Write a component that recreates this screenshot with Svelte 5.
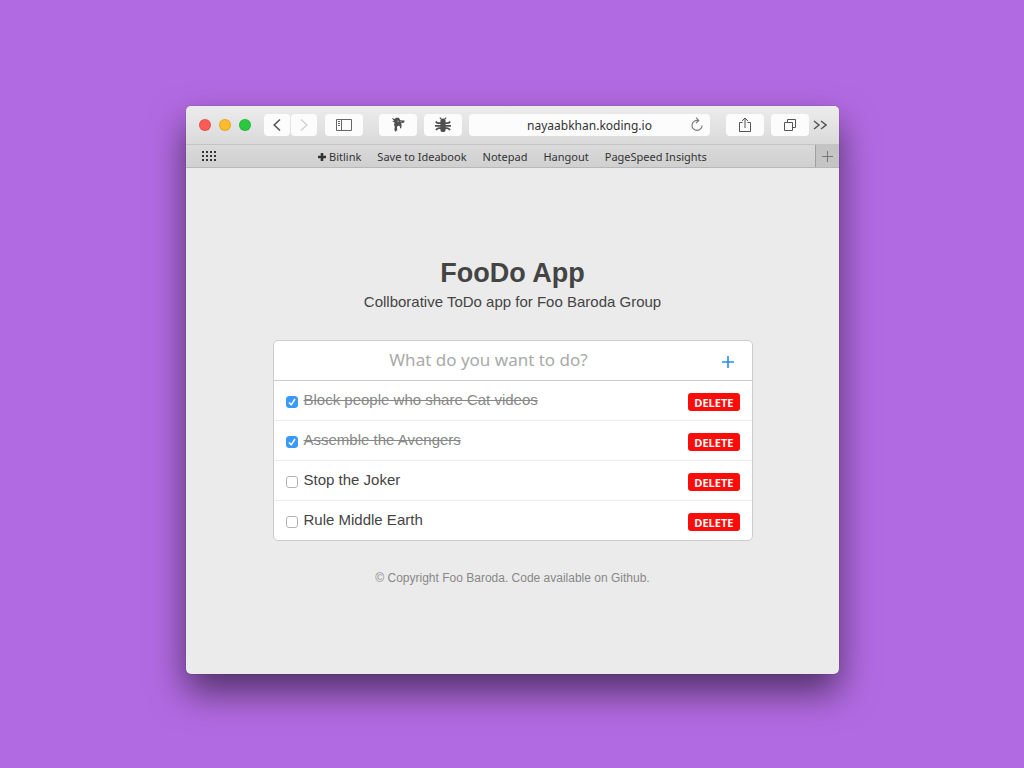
<script lang="ts">
	type Todo = { id: number; text: string; done: boolean };

	const bookmarks = ["Save to Ideabook", "Notepad", "Hangout", "PageSpeed Insights"];

	let draft = $state("");
	let nextId = 5;
	let todos: Todo[] = $state([
		{ id: 1, text: "Block people who share Cat videos", done: true },
		{ id: 2, text: "Assemble the Avengers", done: true },
		{ id: 3, text: "Stop the Joker", done: false },
		{ id: 4, text: "Rule Middle Earth", done: false },
	]);

	function add(event: SubmitEvent) {
		event.preventDefault();
		const text = draft.trim();
		if (!text) return;
		todos.push({ id: nextId++, text, done: false });
		draft = "";
	}

	function remove(id: number) {
		todos = todos.filter((todo) => todo.id !== id);
	}
</script>

<div class="desktop">
	<div class="window">
		<header class="toolbar">
			<div class="lights">
				<button class="light close" aria-label="Close"></button>
				<button class="light minimize" aria-label="Minimize"></button>
				<button class="light zoom" aria-label="Zoom"></button>
			</div>
			<div class="history">
				<button class="tool half" aria-label="Back">
					<svg width="10" height="14" viewBox="0 0 10 14" fill="none" stroke="#555" stroke-width="1.6"><path d="M8 1.5 2.2 7 8 12.5" /></svg>
				</button>
				<button class="tool half" aria-label="Forward" disabled>
					<svg width="10" height="14" viewBox="0 0 10 14" fill="none" stroke="#d0d0d0" stroke-width="1.4"><path d="M2 1.5 7.8 7 2 12.5" /></svg>
				</button>
			</div>
			<button class="tool" aria-label="Sidebar">
				<svg width="16" height="14" viewBox="0 0 16 14" fill="none" stroke="#666" stroke-width="1"><path d="M.5 1.5h15v11H.5zM5.5 1.5v11M2 3.5h2M2 5.5h2M2 7.5h2" /></svg>
			</button>
			<div class="extensions">
				<button class="tool" aria-label="Ghostery">
					<svg width="14" height="16" viewBox="0 0 14 16" fill="#505050"><path d="M.8 1 3.600 2 5 .8h3l1.200 2.400 4.200.4v2l-3.400.6.6 1.600-.2 2.800-1.200 1.200-.4-2.600-1.400-.6-1.400 1.400.2 3.200-2 1.600-.8-2 .4-3.200-.8-1.600.6-2.400L1 4.600 3 4z" /><path d="M6.500 4.200h1.300M9.500 4.600h1" stroke="#fff" stroke-width=".7" /></svg>
				</button>
				<button class="tool" aria-label="Firebug">
					<svg width="18" height="16" viewBox="0 0 18 16" fill="none" stroke="#505050" stroke-width="1.8"><rect x="6.400" y="1.600" width="5.200" height="13.400" rx="2.600" fill="#505050" stroke="none" /><path d="M5.800.6 7.500 2.400M12.200.6l-1.700 1.800" stroke-width="1.200" /><path d="M7 6.200H4.800Q3 6.200 1.800 4.400M11 6.200h2.200q1.800 0 3-1.800M1 8.800h16M7 11.200H5q-2 0-3 2M11 11.200h2q2 0 3 2" /></svg>
				</button>
			</div>
			<div class="address">
				<input type="text" value="nayaabkhan.koding.io" aria-label="Address" spellcheck="false" />
				<button class="reload" aria-label="Reload">
					<svg width="14" height="16" viewBox="0 0 14 16" fill="none" stroke="#777" stroke-width="1.1"><path d="M8.200 3.400H7A5 5 0 1 0 12 8.400M6 .6l2.800 2.800L6 6.200" /></svg>
				</button>
			</div>
			<div class="actions">
				<button class="tool" aria-label="Share">
					<svg width="14" height="16" viewBox="0 0 14 16" fill="none" stroke="#555" stroke-width="1"><path d="M4.500 5.500h-3v9h11v-9h-3M7 11V1.500M4 4l3-3 3 3" /></svg>
				</button>
				<button class="tool" aria-label="Show all tabs">
					<svg width="14" height="14" viewBox="0 0 14 14" fill="none" stroke="#555" stroke-width="1"><path d="M1.500 4.500h8v8h-8zM4.500 4.500v-3h8v8h-3" /></svg>
				</button>
			</div>
			<button class="more" aria-label="More">
				<svg width="14" height="10" viewBox="0 0 14 10" fill="none" stroke="#555" stroke-width="1.500"><path d="M1 1l5 4-5 4M8 1l5 4-5 4" /></svg>
			</button>
		</header>

		<nav class="bookmarks">
			<button class="grid" aria-label="Top sites">
				<svg width="14" height="10" viewBox="0 0 14 10" fill="none" stroke="#333" stroke-width="2" stroke-dasharray="2 2"><path d="M0 1h14M0 5h14M0 9h14" /></svg>
			</button>
			<div class="links">
				<a href="#bitlink">
					<svg width="8" height="8" viewBox="0 0 8 8" stroke="#333" stroke-width="2.600"><path d="M4 0v8M0 4h8" /></svg>
					Bitlink
				</a>
				{#each bookmarks as name}
					<a href="#{name.toLowerCase().replaceAll(' ', '-')}">{name}</a>
				{/each}
			</div>
			<button class="new-tab" aria-label="New tab">
				<svg width="11" height="11" viewBox="0 0 11 11" stroke="#777" stroke-width="1"><path d="M5.500 0v11M0 5.500h11" /></svg>
			</button>
		</nav>

		<main>
			<h1>FooDo App</h1>
			<p class="tagline">Collborative ToDo app for Foo Baroda Group</p>

			<div class="card">
				<form onsubmit={add}>
					<input type="text" bind:value={draft} placeholder="What do you want to do?" aria-label="What do you want to do?" />
					<button aria-label="Add">
						<svg width="12" height="12" viewBox="0 0 12 12" stroke="#2b8cf0" stroke-width="1.600"><path d="M6 0v12M0 6h12" /></svg>
					</button>
				</form>
				<ul>
					{#each todos as todo (todo.id)}
						<li>
							<label class:done={todo.done}>
								<input type="checkbox" bind:checked={todo.done} />
								<span>{todo.text}</span>
							</label>
							<button class="delete" onclick={() => remove(todo.id)}>DELETE</button>
						</li>
					{/each}
				</ul>
			</div>

			<footer>© Copyright Foo Baroda. Code available on Github.</footer>
		</main>
	</div>
</div>

<style>
	:global(body) {
		margin: 0;
		background: #b26ae2;
	}

	.desktop {
		box-sizing: border-box;
		min-height: 100vh;
		padding: 12px 16px 0 17px;
		display: flex;
		align-items: center;
		justify-content: center;
		font-family: "Liberation Sans", Arial, sans-serif;
		color: #444;
	}

	button {
		display: flex;
		align-items: center;
		justify-content: center;
		padding: 0;
		border: 0;
		background: none;
		cursor: pointer;
	}

	.window {
		width: 100%;
		max-width: 653px;
		overflow: hidden;
		border-radius: 5px;
		background: #ebebeb;
		box-shadow: 0 0 1px rgba(0, 0, 0, 0.5), 0 18px 36px rgba(0, 0, 0, 0.55);
	}

	.toolbar {
		display: flex;
		align-items: center;
		height: 38px;
		padding: 0 12px 0 13px;
		border-bottom: 1px solid #c4c4c4;
		background: linear-gradient(#ececec, #dadada);
	}

	.lights {
		display: flex;
		gap: 8px;
		margin-right: 13px;
	}

	.light {
		box-sizing: border-box;
		width: 12px;
		height: 12px;
		border: 1px solid rgba(0, 0, 0, 0.1);
		border-radius: 50%;
	}

	.close {
		background: #fc5b57;
	}

	.minimize {
		background: #fdbc2e;
	}

	.zoom {
		background: #2ac940;
	}

	.history {
		display: flex;
		gap: 1px;
		margin-right: 8px;
	}

	.tool {
		width: 38px;
		height: 22px;
		flex: none;
		border-radius: 4px;
		background: #fcfcfc;
	}

	.tool.half {
		width: 26px;
	}

	.extensions,
	.actions {
		display: flex;
		gap: 7px;
		margin: 0 7px 0 16px;
	}

	.actions {
		margin-right: 4px;
	}

	.address {
		display: flex;
		flex: 1;
		min-width: 0;
		height: 22px;
		border-radius: 4px;
		background: #fcfcfc;
	}

	.address input {
		flex: 1;
		min-width: 0;
		padding: 0 0 0 26px;
		border: 0;
		background: none;
		font: 12px "Noto Sans", sans-serif;
		color: #333;
		text-align: center;
	}

	.reload {
		width: 26px;
	}

	.bookmarks {
		display: flex;
		align-items: stretch;
		height: 22px;
		border-bottom: 1px solid #b8b8b8;
		background: linear-gradient(#dadada, #d0d0d0);
	}

	.grid {
		width: 46px;
	}

	.links {
		display: flex;
		flex: 1;
		align-items: center;
		justify-content: center;
		gap: 16px;
		padding-right: 22px;
	}

	.links a {
		font: 11px "Noto Sans", sans-serif;
		color: #333;
		text-decoration: none;
		white-space: nowrap;
	}

	.new-tab {
		width: 24px;
		border-left: 1px solid #a0a0a0;
		background: #c4c4c4;
	}

	main {
		padding: 88px 24px 87px;
		text-align: center;
	}

	h1 {
		margin: 0;
		font-size: 27px;
		line-height: 34px;
	}

	.tagline {
		margin: 0 0 26px;
		font-size: 15px;
		line-height: 24px;
	}

	.card {
		max-width: 478px;
		margin: 0 auto;
		overflow: hidden;
		border: 1px solid #ccc;
		border-radius: 5px;
		background: #fff;
	}

	form {
		display: flex;
		height: 39px;
		border-bottom: 1px solid #ccc;
	}

	form input {
		flex: 1;
		min-width: 0;
		padding: 0 0 2px;
		border: 0;
		outline: 0;
		background: none;
		font: 17px "Noto Sans", sans-serif;
		text-align: center;
	}

	form input::placeholder {
		color: #aaa;
	}

	form button {
		width: 48px;
		padding-top: 2px;
	}

	ul {
		margin: 0;
		padding: 0;
		list-style: none;
	}

	li {
		box-sizing: border-box;
		display: flex;
		align-items: center;
		justify-content: space-between;
		height: 40px;
		padding: 0 12px;
		border-bottom: 1px solid #ededed;
	}

	li:last-child {
		height: 39px;
		border-bottom: 0;
	}

	label {
		display: flex;
		align-items: center;
		gap: 6px;
		font-size: 15px;
	}

	label.done {
		color: #888;
	}

	label span {
		padding-bottom: 2px;
	}

	label.done span {
		text-decoration: line-through;
	}

	input[type="checkbox"] {
		appearance: none;
		width: 12px;
		height: 12px;
		margin: 2px 0 0;
		border: 1px solid #b4b4b4;
		border-radius: 3px;
		background: #fff;
		box-sizing: border-box;
	}

	input[type="checkbox"]:checked {
		border-color: #3b99fc;
		background: #3b99fc url("data:image/svg+xml,%3Csvg xmlns='http://www.w3.org/2000/svg' viewBox='0 0 10 10'%3E%3Cpath d='M2 5.500 4.200 7.800 8 2' fill='none' stroke='white' stroke-width='1.500'/%3E%3C/svg%3E") center / 10px;
	}

	.delete {
		height: 18px;
		margin-top: 3px;
		padding: 0 6px;
		border-radius: 3px;
		background: #fb0d0a;
		font: bold 11px "Open Sans", sans-serif;
		color: #fff;
	}

	footer {
		margin-top: 28px;
		font-size: 12px;
		line-height: 18px;
		color: #888;
	}
</style>
